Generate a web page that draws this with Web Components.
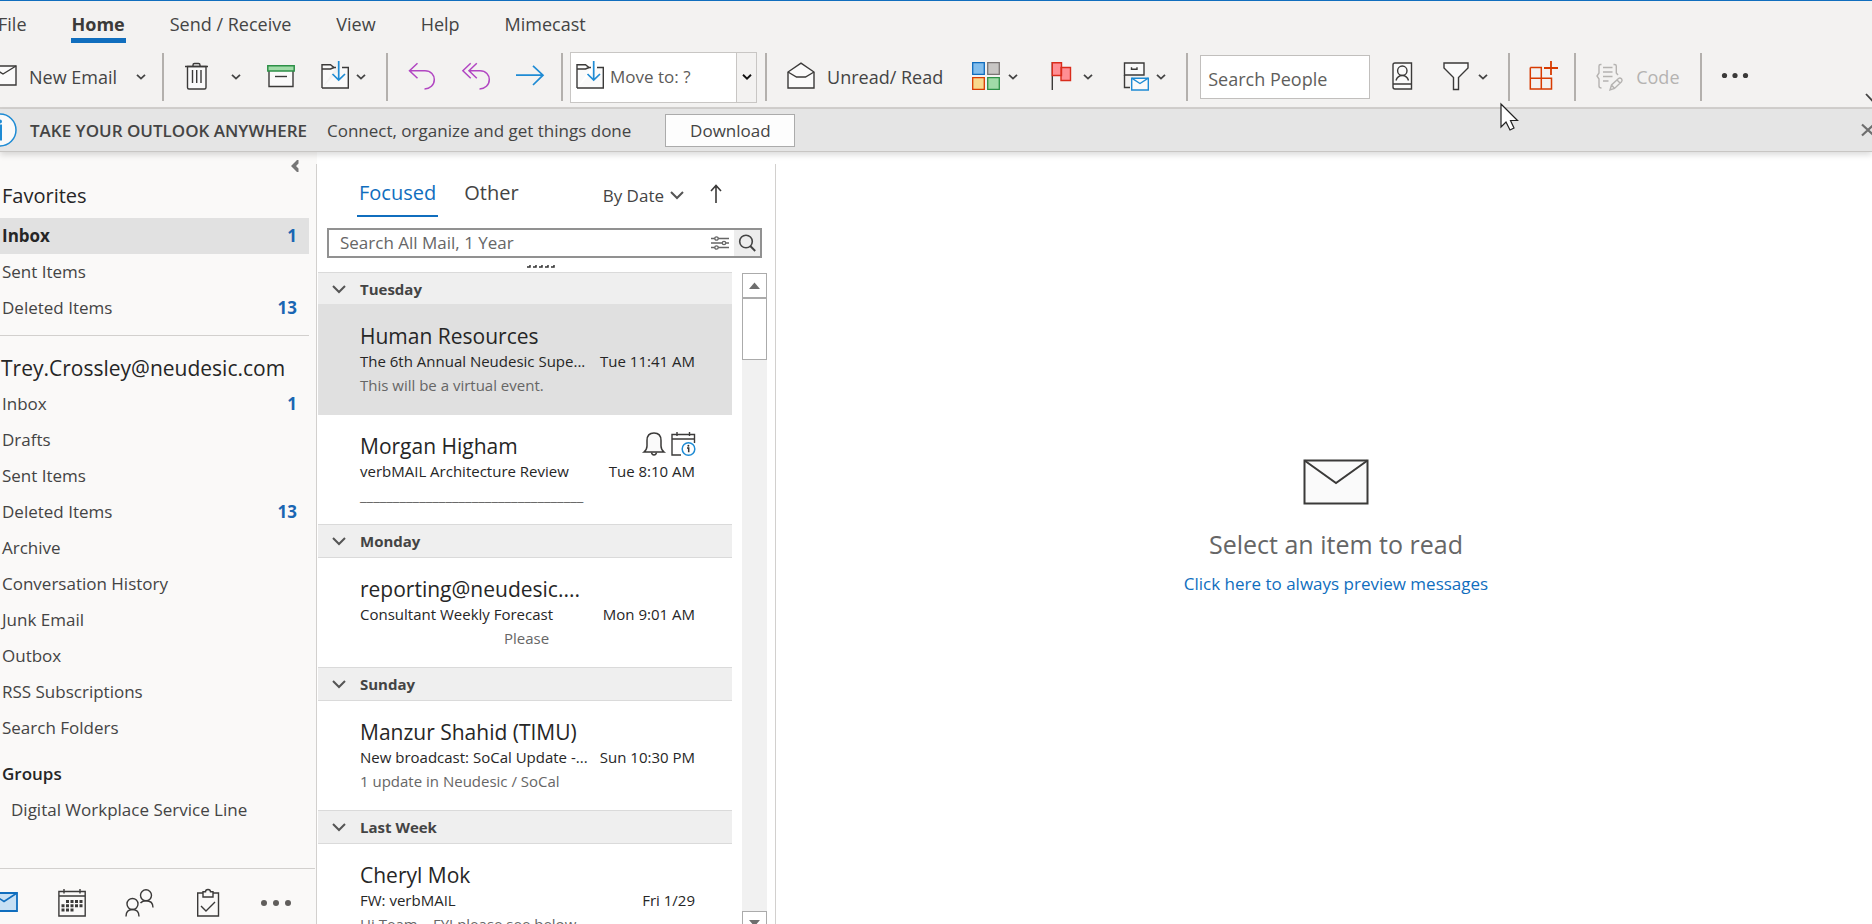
<!DOCTYPE html>
<html lang="en">
<head>
<meta charset="utf-8">
<title>Inbox - Outlook</title>
<style>
  html, body { margin: 0; height: 100%; }
  body { font-family: "Open Sans", "Noto Sans", sans-serif; font-size: 17px; color: #444; overflow: hidden; }
</style>
</head>
<body>
<outlook-app></outlook-app>
<script>
const BASE = `
  *, *::before, *::after { box-sizing: border-box; }
  button, input, select { font: inherit; color: inherit; margin: 0; padding: 0; border: 0; background: none; border-radius: 0; }
  button { display: inline-flex; align-items: center; white-space: nowrap; cursor: pointer; }
  a { color: inherit; text-decoration: none; }
  h2, h3, p, ul { margin: 0; padding: 0; font-weight: 400; }
  ul { list-style: none; }
`;

const D = 'fill="none" stroke="#3b3a39" stroke-width="1.4"';
const ICONS = {
  chevron: [10, 6, `<path d="M1 .8L5 4.6L9 .8" fill="none" stroke="#444" stroke-width="1.8"/>`],
  chevronDark: [10, 6, `<path d="M1 .8L5 4.6L9 .8" fill="none" stroke="#111" stroke-width="1.9"/>`],
  chevronWide: [14, 8, `<path d="M1 1L7 7L13 1" fill="none" stroke="#555" stroke-width="2"/>`],
  chevronLeft: [8, 12, `<path d="M7.5 0V3.5L5 6L7.5 8.5V12H6L0 6L6 0Z" fill="#767676"/>`],
  chevronRibbon: [16, 10, `<path d="M1 1L8 8.5L15 1" fill="none" stroke="#444" stroke-width="1.8"/>`],
  newMail: [28, 32, `<path d="M1 5H27V24H1Z" fill="#fafafa" stroke="#3b3a39" stroke-width="1.4"/><path d="M1 5L14 13L27 5" ${D}/>`],
  trash: [28, 32, `<path d="M5.5 5.5H24V26.5Q24 28 22.5 28H7Q5.5 28 5.5 26.5Z" fill="#fafafa" stroke="#3b3a39" stroke-width="1.4"/><path d="M3 5.5H26M11 5V4Q11 2.5 12.500 2.5H16.500Q18 2.5 18 4V5M10.500 9V22M14.700 9V22M19 9V22" ${D}/>`],
  archive: [28, 32, `<path d="M2 10V25.500H26V10" fill="#fafafa" stroke="#3b3a39" stroke-width="1.4"/><path d="M.8 4.800H27.200V10H.8Z" fill="#a0dba8" stroke="#2d9047" stroke-width="1.500"/><path d="M8 15.500H20" ${D}/>`],
  moveFolder: [28, 32, `<path d="M1 27V3.800H9.500L13 6.500H15M21 6.500H27.300V27H1" fill="#fafafa" stroke="#3b3a39" stroke-width="1.4"/><path d="M1 8H9.500L13 6.500" ${D}/><path d="M17.700 0V18.500M11.500 13L17.700 19L24 13" fill="none" stroke="#1e8bd4" stroke-width="1.700"/>`],
  reply: [28, 32, `<path d="M9.500 2.300L1.500 9.700L9.500 17.300M1.500 9.700H17C23 9.700 26.300 14 26.300 18.500C26.300 24 22 28 16.500 28" fill="none" stroke="#b146c2" stroke-width="1.500"/>`],
  replyAll: [28, 32, `<path d="M8.700 2.300L.9 9.700L8.700 17.300M14.800 2.300L7 9.700L14.800 17.300M7 9.700H18C24 9.700 27.300 14 27.300 18.500C27.300 24 23 28 17.500 28" fill="none" stroke="#b146c2" stroke-width="1.500"/>`],
  forward: [28, 32, `<path d="M0 14.200H27M17 4.800L27 14.200L17 24" fill="none" stroke="#1e8bd4" stroke-width="1.700"/>`],
  openMail: [28, 32, `<path d="M1 27V11L14 2.200L27 11V27Z" fill="#fafafa" stroke="#3b3a39" stroke-width="1.4"/><path d="M1 11L9.500 16H18.500L27 11" ${D}/>`],
  categories: [28, 32, `<g stroke-width="1.300"><path d="M.7 1.700H12.300V13.300H.7Z" fill="#83beec" stroke="#0f6cbd"/><path d="M15.700 1.700H27.300V13.300H15.700Z" fill="#c8c6c4" stroke="#7a7574"/><path d="M.7 16.700H12.300V28.300H.7Z" fill="#f9d98c" stroke="#d83b01"/><path d="M15.700 16.700H27.300V28.300H15.700Z" fill="#a0dba8" stroke="#2d9047"/></g>`],
  flag: [28, 32, `<path d="M5.300 1V29" ${D}/><path d="M14 6.500H23.500V19.500H14Z M5.300 1.700H14.500V14.500H5.300Z" fill="#ff8f94" stroke="#d92c1c" stroke-width="1.400"/>`],
  rules: [28, 32, `<path d="M2.500 2H22V14H2.500Z" fill="#fafafa" stroke="#3b3a39" stroke-width="1.4"/><path d="M9.500 6.300V8.300H15V6.300M2.500 14V26.500H8" ${D}/><path d="M9.700 17.200H26.300V29H9.700Z" fill="#fafafa" stroke="#1e8bd4" stroke-width="1.400"/><path d="M9.700 17.200L18 22.500L26.300 17.200" fill="none" stroke="#1e8bd4" stroke-width="1.400"/>`],
  addressBook: [28, 32, `<path d="M7 2H23.500V28H7Q5 28 5 26V4Q5 2 7 2Z" fill="#fafafa" stroke="#3b3a39" stroke-width="1.4"/><circle cx="14.300" cy="9.700" r="4.700" ${D}/><path d="M8 19.500Q9.500 14.500 14.300 14.500Q19 14.500 20.500 19.500M5 23H23.500" ${D}/>`],
  filter: [28, 32, `<path d="M2 2H26V7L16.500 16.500V28.500H11.500V16.500L2 7Z" fill="#fafafa" stroke="#3b3a39" stroke-width="1.4"/>`],
  addins: [28, 32, `<path d="M.3 6.500H11.300V28M.3 6.500V28H21.500V17.300H.3" fill="none" stroke="#d83b01" stroke-width="1.500"/><path d="M21 0V14M14 7H28" stroke="#d83b01" stroke-width="1.800"/>`],
  code: [28, 32, `<g fill="none" stroke="#b5b3b1" stroke-width="1.400"><path d="M5.500 3.500H4.500Q3 3.500 3 5V12L1 15L3 18V25Q3 27 5.500 27M17.500 3.500H18.500Q20.300 3.500 20.300 5V12L22 14M7 6.500H16.500M7 11H16.500M7 15.500H16.500M7 20H12.500"/><path d="M14 29L15.500 24L22.500 17.500Q24 16.500 25.500 17.700Q26.700 19.200 25.500 20.700L18.500 27.500Z M15.500 24L18.500 27.500M21 19L24 22"/></g>`],
  more: [28, 32, `<g fill="#3b3a39"><circle cx="2.500" cy="14.500" r="2.600"/><circle cx="13" cy="14.500" r="2.600"/><circle cx="23.500" cy="14.500" r="2.600"/></g>`],
  info: [34, 34, `<circle cx="17" cy="17" r="16" fill="#fafafa" stroke="#1e8bd4" stroke-width="1.500"/><path d="M13.500 13H17.500V26M13 26H19" fill="none" stroke="#1e8bd4" stroke-width="3"/><circle cx="17" cy="8.500" r="2" fill="#1e8bd4"/>`],
  close: [14, 12, `<path d="M1 .5L13 11.500M13 .5L1 11.500" stroke="#6e6e6e" stroke-width="2.200"/>`],
  arrowUp: [12, 20, `<path d="M6 19V2M1 7L6 1.500L11 7" fill="none" stroke="#3b3a39" stroke-width="1.600"/>`],
  sliders: [18, 14, `<g fill="#fff" stroke="#666" stroke-width="1.300"><path d="M0 2.500H18M0 7H18M0 11.500H18"/><circle cx="5.500" cy="2.500" r="1.700"/><circle cx="13" cy="7" r="1.700"/><circle cx="5.500" cy="11.500" r="1.700"/></g>`],
  search: [18, 18, `<circle cx="8" cy="7.500" r="6.300" fill="none" stroke="#444" stroke-width="1.600"/><path d="M12.300 12L17.200 17" stroke="#444" stroke-width="1.900"/>`],
  bell: [22, 24, `<path d="M1 20H21Q18 17.500 18 14V8.500Q18 1 11 1Q4 1 4 8.500V14Q4 17.500 1 20Z" fill="#fafafa" stroke="#3b3a39" stroke-width="1.500"/><path d="M8.500 20.500Q9 23 11 23Q13 23 13.500 20.500" ${D}/>`],
  meeting: [24, 24, `<path d="M10 23H1V2.500H23.500V11M1 7H23.500M6 0V4M18.500 0V4" ${D}/><circle cx="17.500" cy="17" r="6.300" fill="#fff" stroke="#1e8bd4" stroke-width="1.500"/><path d="M16 16H17.700V20.300" fill="none" stroke="#333" stroke-width="1.500"/><circle cx="17.400" cy="13.700" r="1" fill="#333"/>`],
  bigMail: [66, 46, `<path d="M1.500 1.500H64.500V44.500H1.500Z" fill="#fafafa" stroke="#3b3a39" stroke-width="2"/><path d="M1.500 1.500L33 24L64.500 1.500" fill="none" stroke="#3b3a39" stroke-width="2"/>`],
  navMail: [28, 28, `<path d="M1 4H27V22H1Z" fill="#c7e0f4" stroke="#106ebe" stroke-width="1.800"/><path d="M1 4L14 12.500L27 4" fill="none" stroke="#106ebe" stroke-width="1.600"/>`],
  navCalendar: [28, 28, `<path d="M.9 2.500H27.200V27H.9ZM.9 7H27.200M6 0V4.500M22 0V4.500" ${D}/><g fill="#3b3a39"><path d="M8 11h3v3h-3zM12.500 11h3v3h-3zM17 11h3v3h-3zM21.500 11h3v3h-3zM3.500 15.300h3v3h-3zM8 15.300h3v3h-3zM12.500 15.300h3v3h-3zM17 15.300h3v3h-3zM21.500 15.300h3v3h-3zM3.500 19.600h3v3h-3zM8 19.600h3v3h-3zM12.500 19.600h3v3h-3z"/></g>`],
  navPeople: [28, 28, `<g ${D}><circle cx="6.500" cy="15" r="5.500"/><path d="M0 27.500Q0 20.500 6.500 20.500Q13 20.500 13 27.500"/><circle cx="20" cy="6.300" r="5.500"/><path d="M14.500 14Q16.500 11.800 20 11.800Q27 11.800 27 18.500"/></g>`],
  navTasks: [28, 28, `<g ${D}><path d="M9 4H3.700V27H24.500V4H19"/><path d="M9 2.800H11.500Q11.500 .5 14 .5Q16.500 .5 16.500 2.800H19V8H9Z"/><path d="M7 17L12 22L21 13"/></g>`],
  navMore: [28, 28, `<g fill="#605e5c"><circle cx="2" cy="14" r="3"/><circle cx="14" cy="14" r="3"/><circle cx="26" cy="14" r="3"/></g>`],
  pointer: [20, 28, `<path d="M1 1V24L6 19L10 27L14 25L10.500 17.500H17.500Z" fill="#fff" stroke="#222" stroke-width="1.200"/>`],
  up: [11, 7, `<path d="M0 7L5.500 .5L11 7Z" fill="#6e6e6e"/>`],
  down: [11, 7, `<path d="M0 0L5.500 6.500L11 0Z" fill="#6e6e6e"/>`],
  grip: [28, 4, `<path d="M0 3h3v-2M6 3h3v-2M12 3h3v-2M18 3h3v-2M24 3h3v-2" fill="none" stroke="#333" stroke-width="1.500"/>`]
};

class Base extends HTMLElement {
  connectedCallback() {
    if (this.shadowRoot) return;
    this.attachShadow({ mode: 'open' }).innerHTML =
      `<style>${BASE}:host{box-sizing:border-box}${this.css()}</style>${this.html()}`;
  }
  attr(n, d = '') { return this.getAttribute(n) ?? d; }
  css() { return ''; }
  html() { return '<slot></slot>'; }
}

customElements.define('ui-icon', class extends Base {
  css() { return `:host{display:block;flex:none}svg{display:block;overflow:visible}`; }
  html() {
    const [w, h, body] = ICONS[this.attr('name')];
    return `<svg width="${w}" height="${h}" viewBox="0 0 ${w} ${h}" aria-hidden="true">${body}</svg>`;
  }
});

/* Ribbon */
customElements.define('ribbon-tab', class extends Base {
  css() { return `
    :host{display:block;font-size:18px}
    button{height:37px;padding:8px 1px 0;line-height:24px}
    :host([active]) button{font-weight:700;color:#3b3a39}
    :host([active])::after{content:"";display:block;height:5px;background:#106ebe}`; }
  html() { return `<button type="button"><slot></slot></button>`; }
});

customElements.define('tool-button', class extends Base {
  css() { return `
    :host{display:block;font-size:18px}
    button{gap:12px;height:48px;line-height:24px}
    button:disabled{color:#b5b3b1}
    .split{display:flex;align-items:center;gap:var(--split,8px)}`; }
  html() {
    const t = this.textContent.trim(), label = this.attr('label', t);
    return `<div class="split"><button type="button" aria-label="${label}" ${this.hasAttribute('disabled') ? 'disabled' : ''}>
      <ui-icon name="${this.attr('icon')}"></ui-icon>${t ? '<slot></slot>' : ''}</button>
      ${this.hasAttribute('menu') ? `<button type="button" aria-label="${label} options"><ui-icon name="chevron"></ui-icon></button>` : ''}</div>`;
  }
});

customElements.define('tool-group', class extends Base {
  css() { return `
    :host{--gap:26px;display:flex;align-items:center;gap:var(--gap);padding:0 20px;flex:none}
    :host(:not([last]))::after{content:"";width:2px;height:48px;background:#b3b0ad;margin:0 -20px 0 calc(var(--end,20px) - var(--gap))}
  `; }
});

customElements.define('move-to', class extends Base {
  css() { return `
    :host{display:flex;align-items:center;width:187px;height:51px;background:#fff;border:1px solid #c8c6c4;padding-left:5px;color:#5d5b59}
    select{appearance:none;flex:1;min-width:0;height:49px;padding:0 0 2px 6px;outline:0}
    span{display:grid;place-items:center;width:20px;height:49px;background:#f3f2f1;border-left:1px solid #c8c6c4}`; }
  html() { return `<ui-icon name="moveFolder"></ui-icon>
    <select aria-label="Move to folder"><option>Move to: ?</option></select>
    <span><ui-icon name="chevronDark"></ui-icon></span>`; }
});

customElements.define('people-search', class extends Base {
  css() { return `
    :host{display:block;width:170px}
    input{display:block;width:100%;height:44px;background:#fff;border:1px solid #c1bfbd;padding:4px 7px 0;font-size:18px;outline:0}
    input::placeholder{color:#605e5c;opacity:1}`; }
  html() { return `<input type="text" aria-label="Search People" placeholder="Search People">`; }
});

customElements.define('outlook-ribbon', class extends Base {
  css() { return `
    :host{display:block;background:#f3f2f1;border-top:1px solid #106ebe;border-bottom:2px solid #d2d0ce}
    nav{display:flex;gap:43px;height:46px;margin-left:-3px}
    .tools{display:flex;height:60px;overflow:hidden}
    .first{padding-left:0;margin-left:-11px;--split:19px;--end:16px}
    .delete{padding-left:18px}
    .trash{--split:21px}
    .move{--split:7px}
    .respond{--end:17px}
    .box{--end:8px;padding-left:7px}
    .tags{--gap:29px}
    .rules{--split:6px}
    .find{--gap:18px;padding-left:12px}
    .filter{margin-left:8px}
    .apps{--end:16px}
    .end{align-self:flex-end;margin:0 -9px 4px auto}`; }
  html() { return `
    <nav aria-label="Ribbon tabs">
      <ribbon-tab>File</ribbon-tab><ribbon-tab active>Home</ribbon-tab><ribbon-tab>Send / Receive</ribbon-tab>
      <ribbon-tab>View</ribbon-tab><ribbon-tab>Help</ribbon-tab><ribbon-tab>Mimecast</ribbon-tab>
    </nav>
    <div class="tools">
      <tool-group class="first"><tool-button icon="newMail" menu>New Email</tool-button></tool-group>
      <tool-group class="delete">
        <tool-button class="trash" icon="trash" label="Delete" menu></tool-button>
        <tool-button icon="archive" label="Archive"></tool-button>
        <tool-button class="move" icon="moveFolder" label="Move" menu></tool-button>
      </tool-group>
      <tool-group class="respond">
        <tool-button icon="reply" label="Reply"></tool-button>
        <tool-button icon="replyAll" label="Reply All"></tool-button>
        <tool-button icon="forward" label="Forward"></tool-button>
      </tool-group>
      <tool-group class="box"><move-to></move-to></tool-group>
      <tool-group class="tags">
        <tool-button icon="openMail">Unread/ Read</tool-button>
        <tool-button icon="categories" label="Categorize" menu></tool-button>
        <tool-button icon="flag" label="Follow Up" menu></tool-button>
        <tool-button class="rules" icon="rules" label="Rules" menu></tool-button>
      </tool-group>
      <tool-group class="find">
        <people-search></people-search>
        <tool-button icon="addressBook" label="Address Book"></tool-button>
        <tool-button class="filter" icon="filter" label="Filter Email" menu></tool-button>
      </tool-group>
      <tool-group class="apps"><tool-button icon="addins" label="Get Add-ins"></tool-button></tool-group>
      <tool-group><tool-button icon="code" disabled>Code</tool-button></tool-group>
      <tool-group last><tool-button icon="more" label="More commands"></tool-button></tool-group>
      <button class="end" type="button" aria-label="Ribbon display options"><ui-icon name="chevronRibbon"></ui-icon></button>
    </div>`; }
});

customElements.define('promo-banner', class extends Base {
  css() { return `
    :host{display:flex;align-items:center;height:43px;background:#e5e5e5;border-bottom:1px solid #c8c6c4;box-shadow:0 3px 6px rgba(0,0,0,.14);position:relative;z-index:1;overflow-x:clip;white-space:nowrap}
    ui-icon.info{margin:0 13px 0 -17px}
    strong{font-weight:600;margin-right:14px;min-width:283px}
    .get{justify-content:center;width:130px;height:33px;margin-left:34px;background:#fdfdfd;border:1px solid #ababab}
    .x{margin:0 -3px 0 auto}`; }
  html() { return `<ui-icon class="info" name="info"></ui-icon>
    <strong>TAKE YOUR OUTLOOK ANYWHERE</strong><span>Connect, organize and get things done</span>
    <button class="get" type="button">Download</button>
    <button class="x" type="button" aria-label="Close"><ui-icon name="close"></ui-icon></button>`; }
});

/* Folder pane */
customElements.define('folder-row', class extends Base {
  css() { return `
    :host{display:block}
    a{display:flex;align-items:center;justify-content:space-between;height:36px;padding:0 12px 2px 2px}
    b{color:#1a66b3;font-weight:700}
    :host([selected]) a{background:#e1e1e1;color:#262626;font-weight:700}
    :host([nested]) a{padding-left:11px}`; }
  html() {
    const c = this.attr('count');
    return `<a href="#"><span><slot></slot></span>${c ? `<b>${c}</b>` : ''}</a>`;
  }
});

customElements.define('folder-pane', class extends Base {
  css() { return `
    :host{display:flex;flex-direction:column;width:317px;flex:none;background:#faf9f8;padding-right:1px;
      background-image:linear-gradient(#d2d0ce,#d2d0ce);background-size:1px calc(100% - 12px);background-position:right bottom;background-repeat:no-repeat}
    .fold{align-self:flex-end;height:22px;margin-right:17px;padding-top:8px;align-items:flex-start}
    .folders{flex:1;min-height:0;overflow:hidden;padding-right:7px}
    .fold,h2{flex:none}
    h2{padding-left:2px;color:#262626;font-size:20px;line-height:44px}
    h2.account{margin-top:9px;border-top:1px solid #d2d0ce;padding:14px 0 0 1px;line-height:36px;font-size:21px}
    h2.groups{margin-top:10px;font-size:17px;line-height:36px;font-weight:600}
    nav{display:flex;gap:40px;height:56px;padding-top:20px;margin:0 1px 0 0;border-top:1px solid #d2d0ce;align-items:flex-start}
    nav button{width:28px;height:28px}
    nav button:first-child{margin-left:-10px}`; }
  html() { return `
    <button class="fold" type="button" aria-label="Minimize the folder pane"><ui-icon name="chevronLeft"></ui-icon></button>
    <div class="folders">
      <h2>Favorites</h2>
      <folder-row selected count="1">Inbox</folder-row>
      <folder-row>Sent Items</folder-row>
      <folder-row count="13">Deleted Items</folder-row>
      <h2 class="account">Trey.Crossley@neudesic.com</h2>
      <folder-row count="1">Inbox</folder-row>
      <folder-row>Drafts</folder-row>
      <folder-row>Sent Items</folder-row>
      <folder-row count="13">Deleted Items</folder-row>
      <folder-row>Archive</folder-row>
      <folder-row>Conversation History</folder-row>
      <folder-row>Junk Email</folder-row>
      <folder-row>Outbox</folder-row>
      <folder-row>RSS Subscriptions</folder-row>
      <folder-row>Search Folders</folder-row>
      <h2 class="groups">Groups</h2>
      <folder-row nested>Digital Workplace Service Line</folder-row>
    </div>
    <nav aria-label="Modules">
      <button type="button" aria-label="Mail"><ui-icon name="navMail"></ui-icon></button>
      <button type="button" aria-label="Calendar"><ui-icon name="navCalendar"></ui-icon></button>
      <button type="button" aria-label="People"><ui-icon name="navPeople"></ui-icon></button>
      <button type="button" aria-label="Tasks"><ui-icon name="navTasks"></ui-icon></button>
      <button type="button" aria-label="More"><ui-icon name="navMore"></ui-icon></button>
    </nav>`; }
});

/* Message list */
customElements.define('mail-item', class extends Base {
  css() { return `
    :host{display:block;height:109px;padding:19px 37px 0 42px;font-size:15px;line-height:24px;color:#262626}
    :host([selected]){height:111px;margin-top:-2px;padding-top:20px;background:#e0e0e0;position:relative}
    .top,.mid{display:flex;justify-content:space-between;white-space:nowrap}
    h3{font-size:21px;line-height:25px}
    .icons{display:flex;gap:6px;height:25px;margin-top:-2px}
    p{color:#666;white-space:nowrap}
    :host([indented]) p{text-indent:144px}`; }
  html() { return `
    <div class="top"><h3>${this.attr('from')}</h3><div class="icons"><slot name="icons"></slot></div></div>
    <div class="mid"><span>${this.attr('subject')}</span><time>${this.attr('time')}</time></div>
    <p><slot></slot></p>`; }
});

customElements.define('mail-group', class extends Base {
  css() { return `
    :host{display:block}
    h2{display:flex;background:#efefef;border-top:1px solid #dadada;border-bottom:1px solid #dadada;height:34px}
    button{gap:14px;width:100%;height:32px;padding-left:14px;font-size:15px;font-weight:700}`; }
  html() { return `<h2><button type="button" aria-expanded="true"><ui-icon name="chevronWide"></ui-icon>${this.attr('day')}</button></h2><slot></slot>`; }
});

customElements.define('list-scrollbar', class extends Base {
  css() { return `
    :host{display:flex;flex-direction:column;width:25px;flex:none;background:#f1f1f1;margin-top:1px}
    button{justify-content:center;height:25px;flex:none;background:#fff;border:1px solid #ababab}
    .thumb{height:62px;background:#fff;border:1px solid #ababab}
    button:last-child{margin:auto 0 -12px}`; }
  html() { return `<button type="button" aria-label="Scroll up"><ui-icon name="up"></ui-icon></button><div class="thumb"></div>
    <button type="button" aria-label="Scroll down"><ui-icon name="down"></ui-icon></button>`; }
});

customElements.define('message-list', class extends Base {
  css() { return `
    :host{display:flex;flex-direction:column;width:459px;flex:none;background:#fff;padding:0 1px;
      background-image:linear-gradient(#d2d0ce,#d2d0ce);background-size:1px calc(100% - 12px);background-position:right bottom;background-repeat:no-repeat}
    header{display:flex;align-items:flex-start;height:76px;padding:24px 53px 0 39px;flex:none}
    .tab{height:41px;padding:0 2px;font-size:20px;line-height:26px;align-items:flex-start;padding-top:4px}
    .tab.on{color:#106ebe;border-bottom:2px solid #106ebe}
    .tab + .tab{margin-left:24px}
    .sort{gap:6px;height:38px;margin-left:auto}
    .order{height:36px;margin-left:26px}
    form{display:flex;align-items:center;height:30px;margin:0 13px 0 9px;border:2px solid #919191;flex:none}
    input{flex:1;min-width:0;height:26px;padding:0 11px 2px;outline:0}
    input::placeholder{color:#666;opacity:1}
    form .go{justify-content:center;width:26px;height:26px;margin-left:5px;background:#ededed}
    .grip{display:grid;justify-content:center;height:14px;padding-top:6px;flex:none;margin-right:12px}
    .body{display:flex;flex:1;min-height:0;gap:10px;padding-right:8px}
    .list{flex:1;min-width:0;overflow:hidden}`; }
  html() { return `
    <header>
      <button class="tab on" type="button">Focused</button><button class="tab" type="button">Other</button>
      <button class="sort" type="button" aria-haspopup="menu">By Date<ui-icon name="chevronWide"></ui-icon></button>
      <button class="order" type="button" aria-label="Oldest on top"><ui-icon name="arrowUp"></ui-icon></button>
    </header>
    <form role="search"><input type="text" aria-label="Search mail" placeholder="Search All Mail, 1 Year">
      <button type="button" aria-label="Search tools"><ui-icon name="sliders"></ui-icon></button>
      <button class="go" type="button" aria-label="Search"><ui-icon name="search"></ui-icon></button></form>
    <div class="grip"><ui-icon name="grip"></ui-icon></div>
    <div class="body">
      <div class="list">
        <mail-group day="Tuesday">
          <mail-item selected from="Human Resources" subject="The 6th Annual Neudesic Supe..." time="Tue 11:41 AM">This will be a virtual event.</mail-item>
          <mail-item from="Morgan Higham" subject="verbMAIL Architecture Review" time="Tue 8:10 AM">__________________________________<ui-icon slot="icons" name="bell"></ui-icon><ui-icon slot="icons" name="meeting"></ui-icon></mail-item>
        </mail-group>
        <mail-group day="Monday">
          <mail-item indented from="reporting@neudesic...." subject="Consultant Weekly Forecast" time="Mon 9:01 AM">Please</mail-item>
        </mail-group>
        <mail-group day="Sunday">
          <mail-item from="Manzur Shahid (TIMU)" subject="New broadcast: SoCal Update -..." time="Sun 10:30 PM">1 update in Neudesic / SoCal</mail-item>
        </mail-group>
        <mail-group day="Last Week">
          <mail-item from="Cheryl Mok" subject="FW: verbMAIL" time="Fri 1/29">Hi Team – FYI please see below</mail-item>
        </mail-group>
      </div>
      <list-scrollbar></list-scrollbar>
    </div>`; }
});

customElements.define('reading-pane', class extends Base {
  css() { return `
    :host{display:flex;flex-direction:column;align-items:center;justify-content:center;flex:1;min-width:0;background:#fff;padding:0 0 20px 24px;overflow:hidden}
    h2{font-size:25px;line-height:36px;margin:21px 0 8px;color:#666}
    a{color:#106ebe;line-height:28px}`; }
  html() { return `<ui-icon name="bigMail"></ui-icon><h2>Select an item to read</h2><a href="#">Click here to always preview messages</a>`; }
});

customElements.define('outlook-app', class extends Base {
  css() { return `
    :host{display:flex;flex-direction:column;height:100vh;overflow:hidden;position:relative}
    main{display:flex;flex:1;min-height:0}
    .cursor{position:absolute;left:1500px;top:103px;z-index:2;pointer-events:none}`; }
  html() { return `<outlook-ribbon></outlook-ribbon><promo-banner></promo-banner>
    <main><folder-pane></folder-pane><message-list></message-list><reading-pane></reading-pane></main>
    <ui-icon class="cursor" name="pointer"></ui-icon>`; }
});
</script>
</body>
</html>
